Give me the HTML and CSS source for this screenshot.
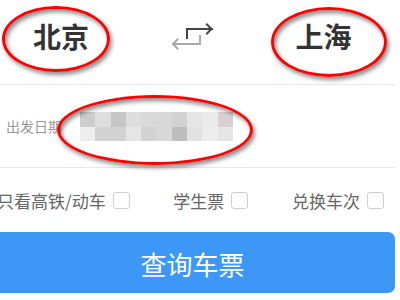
FILE: index.html
```html
<!DOCTYPE html>
<html lang="zh-CN">
<head>
<meta charset="utf-8">
<title>车票查询</title>
<link rel="stylesheet" href="styles.css">
</head>
<body>
<div class="page">
  <div class="cities">
    <div class="city">北京</div>
    <div class="swap">
      <svg width="48" height="30" viewBox="0 0 48 30" fill="none" stroke-linecap="square">
        <path d="M19 17 V8 H44" stroke="#444" stroke-width="2"/>
        <path d="M39 3.5 L43.5 8 L39 12.5" stroke="#444" stroke-width="2"/>
        <path d="M32 15 V23 H5" stroke="#aaa" stroke-width="2"/>
        <path d="M9.5 18.5 L5 23 L9.5 27.5" stroke="#aaa" stroke-width="2"/>
      </svg>
    </div>
    <div class="city">上海</div>
  </div>
  <div class="date-row">
    <span class="date-label">出发日期</span>
    <div class="mosaic">
      <i style="background:#cdcdcd"></i><i style="background:#dedede"></i><i style="background:#c6c6c6"></i><i style="background:#dddddd"></i><i style="background:#d9d9d9"></i><i style="background:#d7d7d7"></i><i style="background:#d2d2d2"></i><i style="background:#e6e6e6"></i><i style="background:#ebebeb"></i><i style="background:#d8d0d0"></i>
      <i style="background:#eeeeee"></i><i style="background:#d3d3d3"></i><i style="background:#d3d3d3"></i><i style="background:#e5e5e5"></i><i style="background:#d3d3d3"></i><i style="background:#d8d8d8"></i><i style="background:#bebebe"></i><i style="background:#e1e1e1"></i><i style="background:#ececec"></i><i style="background:#e6e6e6"></i>
    </div>
  </div>
  <div class="options">
    <label class="opt">只看高铁/动车<span class="box"></span></label>
    <label class="opt">学生票<span class="box"></span></label>
    <label class="opt">兑换车次<span class="box"></span></label>
  </div>
  <div class="btn">查询车票</div>
</div>
<div class="mark mark-from"></div>
<div class="mark mark-to"></div>
<div class="mark mark-date"></div>
</body>
</html>
```
FILE: styles.css
```css
html, body {
  margin: 0;
  padding: 0;
  background: #fff;
  overflow: hidden;
}
body {
  width: 400px;
  height: 300px;
  font-family: "Noto Sans CJK SC", "Noto Sans", sans-serif;
}
.page {
  margin-left: -10px;
  width: 405px;
}
.cities {
  display: grid;
  grid-template-columns: 142px 120px 1fr;
  align-items: center;
  height: 72px;
  padding-bottom: 12px;
  border-bottom: 1px solid #e8e8e8;
}
.city {
  text-align: center;
  font-size: 28px;
  font-weight: 700;
  color: #333;
  line-height: 1;
}
.swap {
  display: flex;
  justify-content: center;
}
.swap svg {
  display: block;
}
.date-row {
  display: flex;
  align-items: center;
  height: 82px;
  padding-left: 16px;
  border-bottom: 1px solid #e8e8e8;
}
.date-label {
  font-size: 14px;
  color: #999;
  line-height: 1;
}
.mosaic {
  margin-left: 18px;
  display: grid;
  grid-template-columns: repeat(10, 15.3px);
  grid-template-rows: 15px 14px;
}
.mosaic i {
  display: block;
}
.options {
  display: flex;
  justify-content: space-between;
  align-items: center;
  height: 64px;
  padding: 0 11px 0 7px;
}
.opt {
  display: flex;
  align-items: center;
  gap: 7px;
  font-size: 17px;
  color: #666;
  line-height: 1;
}
.box {
  width: 15px;
  height: 15px;
  border: 1px solid #cfcfcf;
  border-radius: 3px;
  background: #fff;
}
.btn {
  height: 61px;
  border-radius: 7px;
  background: #3d97f7;
  color: #fff;
  font-size: 26px;
  display: flex;
  align-items: center;
  justify-content: center;
  line-height: 1;
  padding-top: 2px;
  box-sizing: border-box;
}
.mark {
  position: absolute;
  border: 3px solid #f00;
  border-radius: 50%;
  box-sizing: border-box;
  box-shadow: 2px 3px 4px rgba(0,0,0,0.45), inset 2px 3px 4px rgba(0,0,0,0.45);
}
.mark-from {
  left: 2px;
  top: 6px;
  width: 108px;
  height: 66px;
}
.mark-to {
  left: 271px;
  top: 7px;
  width: 116px;
  height: 70px;
}
.mark-date {
  left: 57px;
  top: 95px;
  width: 196px;
  height: 70px;
}
```
